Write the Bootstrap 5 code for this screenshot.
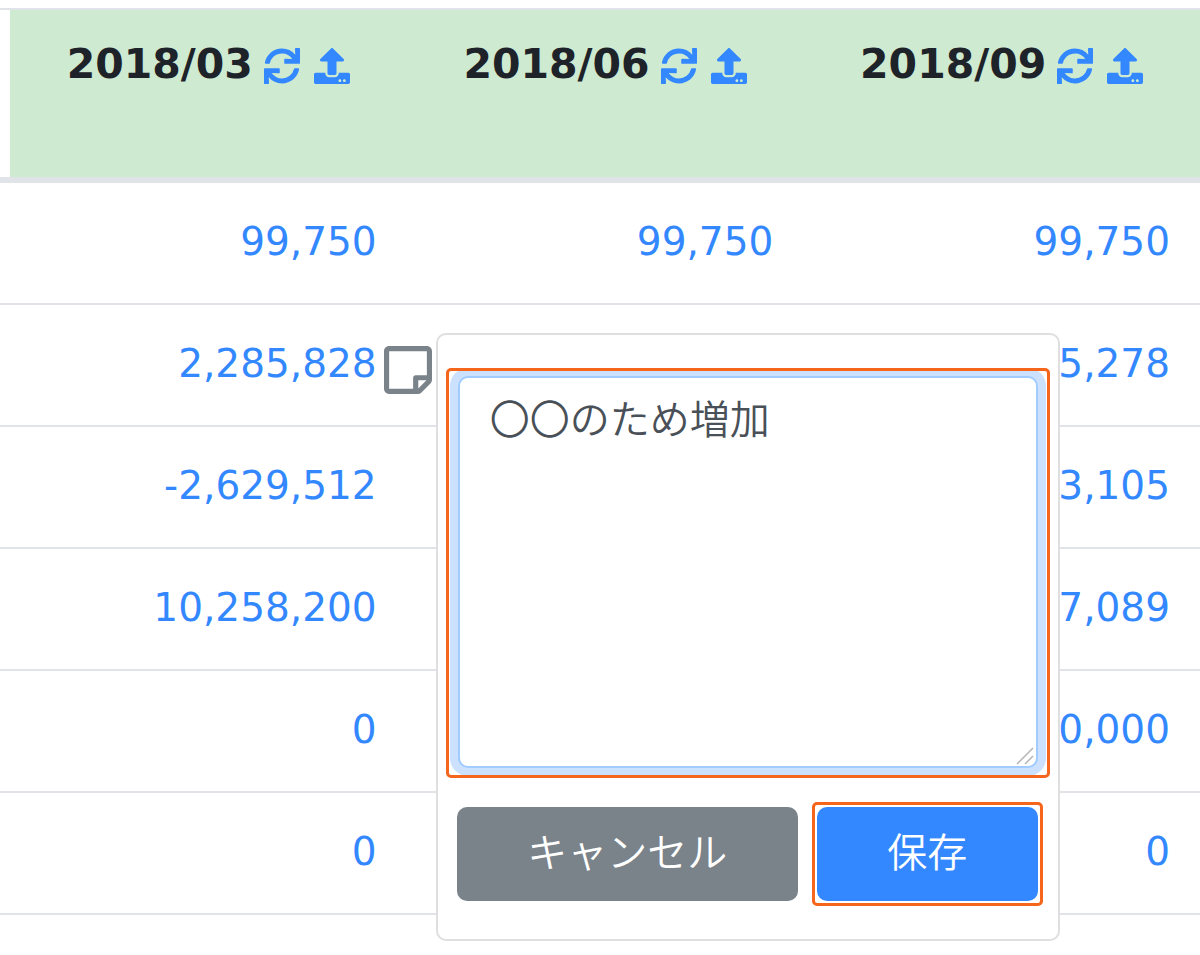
<!DOCTYPE html>
<html lang="ja">
<head>
<meta charset="utf-8">
<meta name="viewport" content="width=device-width, initial-scale=1">
<title>財務データ</title>
<link rel="stylesheet" href="https://cdn.jsdelivr.net/npm/bootstrap@5.3.0/dist/css/bootstrap.min.css">
<style>
  :root { --line: #e0e4e8; --link: #3388ff; --grey: #7a828a; --mark: #f5651b; }
  body { font-family: "DejaVu Sans", "Noto Sans CJK JP", sans-serif; font-size: 39px; line-height: 60px; color: #1e2229; }
  .figures { table-layout: fixed; border-collapse: separate; border-spacing: 0; border-top: 2px solid var(--line); }
  .figures .edge { width: 10px; padding: 0; }
  .figures thead th { padding: 24px 0 83px; border-bottom: 6px solid var(--line); font-size: 41px; }
  .figures thead th.period { background: #ceead0; }
  .figures tbody td { padding: 29px 30px 31px; border-bottom: 2px solid var(--line); }
  .figures a { color: var(--link); }
  .tools { gap: 14px; margin: 3px 0 0 11px; }
  .tool { color: var(--link); line-height: 0; }
  .tool svg { width: 36px; height: 36px; fill: currentColor; }
  .note { left: calc(100% - 23px); top: 41px; color: var(--grey); line-height: 0; }
  .note svg { width: 48px; height: 48px; fill: currentColor; }
  .memo { left: calc(100% + 29px); top: 28px; width: 624px; padding: 33px 8px; border: 2px solid #dfdfdf; border-radius: 10px; z-index: 10; font-family: "Noto Sans CJK JP", sans-serif; font-size: 40px; font-weight: 350; }
  .marked { border: 3px solid var(--mark); border-radius: 5px; }
  .memo-field { padding: 5px 9px 7px; overflow: hidden; }
  .memo-field textarea, .memo-field textarea:focus { height: 392px; padding: 9px 30px; font: inherit; color: #495057; border: 2px solid #a0ccff; border-radius: 10px; box-shadow: 0 0 0 8px #cce1ff; resize: none; }
  .grip { right: 13px; bottom: 10px; width: 18px; height: 18px; }
  .memo .btn { height: 94px; padding: 0 0 8px; font: inherit; color: #fff; border: 0; border-radius: 10px; }
  .memo .cancel { background: var(--grey); }
  .memo .save { width: 221px; background: var(--link); }
  .actions { padding: 0 7px 0 11px; margin-top: 24px; gap: 14px; }
  .save-mark { padding: 2px; }
</style>
</head>
<body>
<svg class="d-none" aria-hidden="true">
  <symbol id="sync" viewBox="0 0 512 512"><path d="M440.65 12.57l4 82.77A247.16 247.16 0 0 0 255.83 8C134.73 8 33.91 94.92 12.29 209.82A12 12 0 0 0 24.09 224h49.05a12 12 0 0 0 11.67-9.26 175.91 175.91 0 0 1 317-56.94l-101.46-4.86a12 12 0 0 0-12.57 12v47.41a12 12 0 0 0 12 12H500a12 12 0 0 0 12-12V12a12 12 0 0 0-12-12h-47.37a12 12 0 0 0-11.98 12.57zM255.83 432a175.61 175.61 0 0 1-146-77.8l101.8 4.87a12 12 0 0 0 12.57-12v-47.4a12 12 0 0 0-12-12H12a12 12 0 0 0-12 12V500a12 12 0 0 0 12 12h47.35a12 12 0 0 0 12-12.6l-4.15-82.57A247.17 247.17 0 0 0 255.83 504c121.11 0 221.93-86.92 243.55-201.82a12 12 0 0 0-11.8-14.18h-49.05a12 12 0 0 0-11.67 9.26A175.86 175.86 0 0 1 255.83 432z"/></symbol>
  <symbol id="upload" viewBox="0 0 512 512"><path d="M296 384h-80c-13.3 0-24-10.7-24-24V192h-87.7c-17.8 0-26.7-21.5-14.1-34.1L242.3 5.7c7.5-7.5 19.8-7.5 27.3 0l152.2 152.2c12.6 12.6 3.7 34.1-14.1 34.1H320v168c0 13.3-10.7 24-24 24zm216-8v112c0 13.3-10.7 24-24 24H24c-13.3 0-24-10.7-24-24V376c0-13.3 10.7-24 24-24h136v8c0 30.9 25.1 56 56 56h80c30.9 0 56-25.1 56-56v-8h136c13.3 0 24 10.7 24 24zm-124 88c0-11-9-20-20-20s-20 9-20 20 9 20 20 20 20-9 20-20zm64 0c0-11-9-20-20-20s-20 9-20 20 9 20 20 20 20-9 20-20z"/></symbol>
</svg>
<main class="pt-2 min-vh-100">
  <table class="figures w-100">
    <thead>
      <tr>
        <th class="edge"></th>
        <th class="period" scope="col"><div class="d-flex justify-content-center align-items-center"><span>2018/03</span><div class="tools d-flex"><button type="button" class="tool btn p-0 border-0" aria-label="更新"><svg><use href="#sync"/></svg></button><button type="button" class="tool btn p-0 border-0" aria-label="アップロード"><svg><use href="#upload"/></svg></button></div></div></th>
        <th class="period" scope="col"><div class="d-flex justify-content-center align-items-center"><span>2018/06</span><div class="tools d-flex"><button type="button" class="tool btn p-0 border-0" aria-label="更新"><svg><use href="#sync"/></svg></button><button type="button" class="tool btn p-0 border-0" aria-label="アップロード"><svg><use href="#upload"/></svg></button></div></div></th>
        <th class="period" scope="col"><div class="d-flex justify-content-center align-items-center"><span>2018/09</span><div class="tools d-flex"><button type="button" class="tool btn p-0 border-0" aria-label="更新"><svg><use href="#sync"/></svg></button><button type="button" class="tool btn p-0 border-0" aria-label="アップロード"><svg><use href="#upload"/></svg></button></div></div></th>
      </tr>
    </thead>
    <tbody class="text-end">
      <tr><td class="edge"></td><td><a class="text-decoration-none" href="#">99,750</a></td><td><a class="text-decoration-none" href="#">99,750</a></td><td><a class="text-decoration-none" href="#">99,750</a></td></tr>
      <tr>
        <td class="edge"></td>
        <td class="position-relative">
          <a class="text-decoration-none" href="#">2,285,828</a>
          <button type="button" class="note btn p-0 border-0 position-absolute" aria-label="メモ"><svg viewBox="0 32 448 448"><path d="M448 348.106V80c0-26.51-21.49-48-48-48H48C21.49 32 0 53.49 0 80v351.988c0 26.51 21.49 48 48 48h268.118a48 48 0 0 0 33.941-14.059l83.882-83.882A48 48 0 0 0 448 348.106zm-128 80v-76.118h76.118L320 428.106zM400 80v223.988H296c-13.255 0-24 10.745-24 24v104H48V80h352z"/></svg></button>
          <form class="memo position-absolute bg-white text-start">
            <div class="memo-field marked position-relative">
              <textarea class="form-control d-block" aria-label="メモ">〇〇のため増加</textarea>
              <svg class="grip position-absolute" viewBox="0 0 18 18" fill="none" stroke="#b5b5b5" stroke-width="1.5" aria-hidden="true"><path d="M1 17L17 1M9 17L17 9"/></svg>
            </div>
            <div class="actions d-flex align-items-center">
              <button type="button" class="btn cancel flex-fill">キャンセル</button>
              <div class="save-mark marked"><button type="submit" class="btn save d-block">保存</button></div>
            </div>
          </form>
        </td>
        <td></td>
        <td><a class="text-decoration-none" href="#">5,278</a></td>
      </tr>
      <tr><td class="edge"></td><td><a class="text-decoration-none" href="#">-2,629,512</a></td><td></td><td><a class="text-decoration-none" href="#">3,105</a></td></tr>
      <tr><td class="edge"></td><td><a class="text-decoration-none" href="#">10,258,200</a></td><td></td><td><a class="text-decoration-none" href="#">7,089</a></td></tr>
      <tr><td class="edge"></td><td><a class="text-decoration-none" href="#">0</a></td><td></td><td><a class="text-decoration-none" href="#">0,000</a></td></tr>
      <tr><td class="edge"></td><td><a class="text-decoration-none" href="#">0</a></td><td></td><td><a class="text-decoration-none" href="#">0</a></td></tr>
    </tbody>
  </table>
</main>
<script src="https://cdn.jsdelivr.net/npm/bootstrap@5.3.0/dist/js/bootstrap.bundle.min.js"></script>
</body>
</html>
